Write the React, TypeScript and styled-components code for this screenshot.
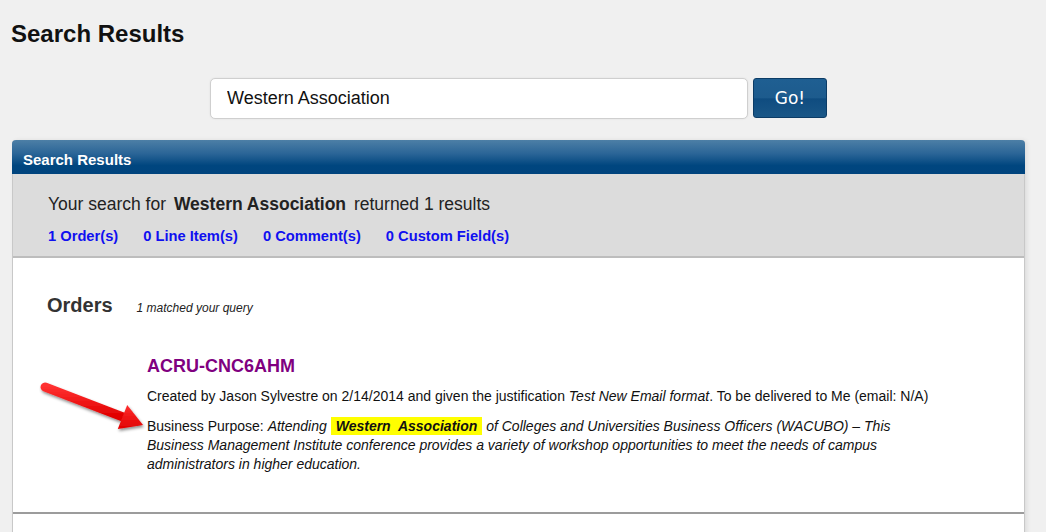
import React from "react";
import styled, { createGlobalStyle } from "styled-components";

const Global = createGlobalStyle`
  html, body { margin: 0; padding: 0; background: #f0f0f0; }
  body { font-family: "Liberation Sans", Arial, sans-serif; color: #222; }
`;

const Page = styled.div`
  padding: 0 21px 0 12px;
  position: relative;
`;

const Title = styled.h1`
  margin: 0;
  padding-top: 19px;
  font-size: 24px;
  line-height: 30px;
  font-weight: bold;
  color: #111;
  margin-left: -1px;
`;

const SearchRow = styled.form`
  display: flex;
  justify-content: center;
  gap: 5px;
  margin-top: 29px;
`;

const SearchInput = styled.input`
  width: 538px;
  height: 41px;
  box-sizing: border-box;
  border: 1px solid #cfcfcf;
  border-radius: 5px;
  background: #fff;
  padding: 0 16px;
  font-family: "Liberation Sans", Arial, sans-serif;
  font-size: 18px;
  color: #111;
  box-shadow: 0 0 2px rgba(0,0,0,0.08);
  outline: none;
`;

const GoButton = styled.button`
  width: 74px;
  height: 40px;
  border: 1px solid #0c3c66;
  border-radius: 3px;
  background: linear-gradient(#1f5f92 0%, #1d5b8d 50%, #0f4c80 52%, #1a5787 100%);
  color: #fff;
  font-family: "DejaVu Sans", Verdana, sans-serif;
  font-size: 17px;
  cursor: pointer;
  padding: 0;
`;

const Panel = styled.section`
  margin-top: 21px;
  background: #fff;
  border: 1px solid #c8c8c8;
  border-top: none;
  border-radius: 4px 4px 0 0;
  box-shadow: 2px 0 4px rgba(0,0,0,0.08);
`;

const PanelHeader = styled.div`
  height: 34px;
  box-sizing: border-box;
  display: flex;
  align-items: center;
  padding: 5px 11px 0;
  border-radius: 4px 4px 0 0;
  margin: 0 -1px;
  background: linear-gradient(#4d7fa6 0%, #2b6597 40%, #00467f 75%, #00447e 100%);
  color: #fff;
  font-size: 15px;
  font-weight: bold;
`;

const Summary = styled.div`
  background: #dcdcdc;
  border-bottom: 2px solid #bdbdbd;
  padding: 18px 35px 11px;
`;

const SummaryText = styled.p`
  margin: 0;
  font-size: 17.5px;
  line-height: 24px;
  color: #222;
  strong { font-weight: bold; margin: 0 3px; }
`;

const LinkRow = styled.div`
  display: flex;
  gap: 25px;
  margin-top: 11px;
`;

const CountLink = styled.a`
  font-size: 14.7px;
  line-height: 18px;
  font-weight: bold;
  color: #1010f0;
  text-decoration: none;
`;

const Body = styled.div`
  padding: 34px 35px 38px;
  border-bottom: 2px solid #9c9c9c;
  position: relative;
`;

const Trailer = styled.div`
  height: 24px;
  background: #fff;
`;

const SectionHead = styled.div`
  display: flex;
  align-items: baseline;
  gap: 24px;
`;

const SectionTitle = styled.h2`
  margin: 0;
  font-size: 20px;
  line-height: 26px;
  font-weight: bold;
  color: #333;
  margin-left: -1px;
`;

const Matched = styled.span`
  font-size: 12px;
  font-style: italic;
  color: #222;
`;

const Order = styled.div`
  margin: 37px 0 0 99px;
`;

const OrderId = styled.a`
  display: block;
  font-size: 18px;
  line-height: 22px;
  font-weight: bold;
  color: #800080;
  text-decoration: none;
`;

const Line = styled.p`
  margin: 10px 0 0;
  font-size: 14px;
  line-height: 19px;
  color: #111;
  em { font-style: italic; }
`;

const Purpose = styled(Line)`
  margin-top: 11px;
  width: 775px;
`;

const Highlight = styled.span`
  display: inline-block;
  background: #ffff00;
  font-weight: bold;
  font-style: italic;
  line-height: 18px;
  padding: 0 5px;
  white-space: pre;
`;

const Arrow = styled.svg`
  position: absolute;
  left: 26px;
  top: 109px;
`;

export default function App() {
  return (
    <>
      <Global />
      <Page>
        <Title>Search Results</Title>
        <SearchRow onSubmit={(e) => e.preventDefault()}>
          <SearchInput defaultValue="Western Association" />
          <GoButton type="submit">Go!</GoButton>
        </SearchRow>
        <Panel>
          <PanelHeader>Search Results</PanelHeader>
          <Summary>
            <SummaryText>
              Your search for <strong>Western Association</strong> returned 1 results
            </SummaryText>
            <LinkRow>
              <CountLink href="#">1 Order(s)</CountLink>
              <CountLink href="#">0 Line Item(s)</CountLink>
              <CountLink href="#">0 Comment(s)</CountLink>
              <CountLink href="#">0 Custom Field(s)</CountLink>
            </LinkRow>
          </Summary>
          <Body>
            <SectionHead>
              <SectionTitle>Orders</SectionTitle>
              <Matched>1 matched your query</Matched>
            </SectionHead>
            <Order>
              <OrderId href="#">ACRU-CNC6AHM</OrderId>
              <Line>
                Created by Jason Sylvestre on 2/14/2014 and given the justification <em>Test New Email format</em>. To be delivered to Me (email: N/A)
              </Line>
              <Purpose>
                Business Purpose: <em>Attending </em>
                <Highlight>{"Western  Association"}</Highlight>
                <em> of Colleges and Universities Business Officers (WACUBO) – This Business Management Institute conference provides a variety of workshop opportunities to meet the needs of campus administrators in higher education.</em>
              </Purpose>
            </Order>
            <Arrow width="120" height="70" viewBox="0 0 120 70">
              <defs>
                <filter id="sh" x="-20%" y="-20%" width="140%" height="160%">
                  <feDropShadow dx="1" dy="2" stdDeviation="1.5" floodColor="#000" floodOpacity="0.45" />
                </filter>
                <linearGradient id="rg" x1="0" y1="0" x2="0" y2="1">
                  <stop offset="0" stopColor="#ff3030" />
                  <stop offset="1" stopColor="#e00000" />
                </linearGradient>
              </defs>
              <g filter="url(#sh)">
                <line x1="6" y1="20" x2="84" y2="50" stroke="url(#rg)" strokeWidth="9" strokeLinecap="round" />
                <polygon points="104,58 78.8,62.1 88.2,37.9" fill="url(#rg)" />
              </g>
            </Arrow>
          </Body>
          <Trailer />
        </Panel>
      </Page>
    </>
  );
}
